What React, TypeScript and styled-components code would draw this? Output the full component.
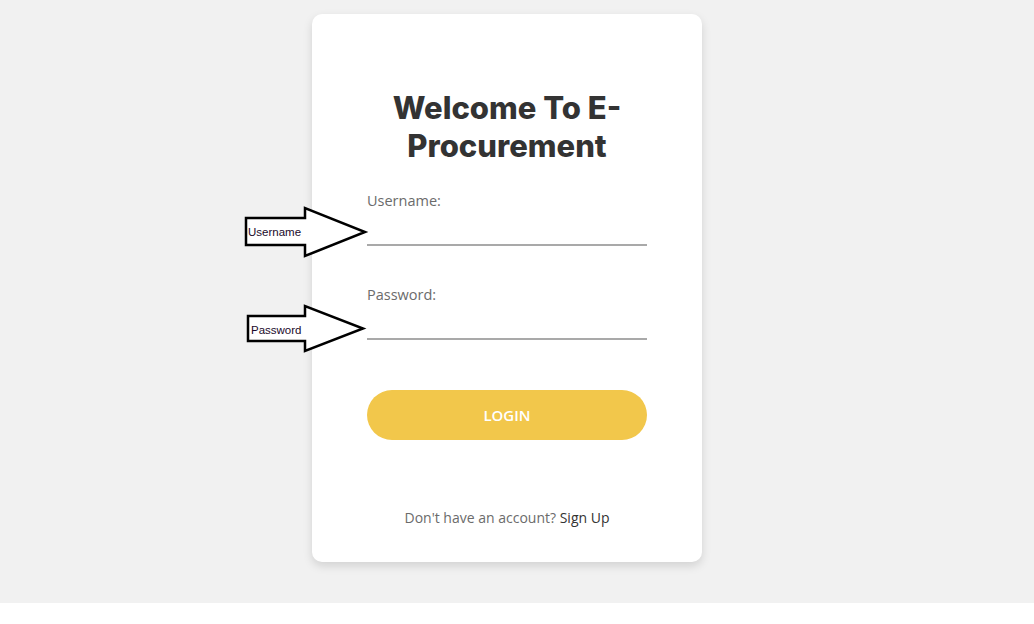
import React from "react";
import styled, { createGlobalStyle } from "styled-components";

const Global = createGlobalStyle`
  html, body { margin: 0; padding: 0; background: #ffffff; }
  body { font-family: "Open Sans", "Noto Sans", sans-serif; }
  * { box-sizing: border-box; }
`;

const Page = styled.main`
  position: relative;
  height: 603px;
  background: #f1f1f1;
  display: flex;
  justify-content: center;
  padding: 14px 20px 0 0;
`;

const Card = styled.section`
  width: 390px;
  height: 548px;
  background: #ffffff;
  border-radius: 10px;
  box-shadow: 0 4px 10px rgba(0, 0, 0, 0.13);
  padding: 75px 55px 0;
  display: flex;
  flex-direction: column;
`;

const Title = styled.h1`
  margin: 0;
  text-align: center;
  font-family: "Inter", "Open Sans", sans-serif;
  font-weight: 800;
  font-size: 31px;
  line-height: 37.5px;
  color: #333333;
  letter-spacing: 0;
`;

const Field = styled.div<{ $top: number }>`
  display: flex;
  flex-direction: column;
  margin-top: ${(p) => p.$top}px;
`;

const Label = styled.label`
  font-family: "Open Sans", sans-serif;
  font-size: 14.5px;
  line-height: 20px;
  color: #6b6b6b;
`;

const Input = styled.input`
  height: 35px;
  border: none;
  border-bottom: 2px solid #a9a9a9;
  background: transparent;
  outline: none;
  font-size: 14px;
  padding: 0;
`;

const LoginButton = styled.button`
  margin-top: 50px;
  height: 50px;
  border: none;
  border-radius: 25px;
  background: #f2c74b;
  color: #ffffff;
  font-family: "Open Sans", sans-serif;
  font-weight: 600;
  font-size: 15px;
  cursor: pointer;
`;

const Footer = styled.p`
  margin: 68px 0 0;
  text-align: center;
  font-family: "Open Sans", sans-serif;
  font-size: 14px;
  line-height: 20px;
  color: #6b6b6b;
`;

const SignUp = styled.a`
  color: #333333;
  text-decoration: none;
`;

const Callout = styled.div<{ $left: number; $top: number }>`
  position: absolute;
  left: ${(p) => p.$left}px;
  top: ${(p) => p.$top}px;
  width: 125px;
  height: 52px;
`;

const CalloutText = styled.span<{ $left: number }>`
  position: absolute;
  left: ${(p) => p.$left}px;
  top: 50%;
  transform: translateY(-50%);
  font-family: "Liberation Sans", "DejaVu Sans", sans-serif;
  font-size: 11.5px;
  color: #1a0a2a;
`;

function Arrow({ rectTop, rectBottom, headTop, headBottom, left, right, neck }: {
  rectTop: number; rectBottom: number; headTop: number; headBottom: number; left: number; right: number; neck: number;
}) {
  const mid = (headTop + headBottom) / 2;
  const pts = `${left},${rectTop} ${neck},${rectTop} ${neck},${headTop} ${right},${mid} ${neck},${headBottom} ${neck},${rectBottom} ${left},${rectBottom}`;
  return (
    <svg width="125" height="52" viewBox="0 0 125 52" style={{ position: "absolute", left: 0, top: 0 }}>
      <polygon points={pts} fill="#ffffff" stroke="#000000" strokeWidth="2.5" strokeLinejoin="miter" />
    </svg>
  );
}

export default function App() {
  return (
    <>
      <Global />
      <Page>
        <Card>
          <Title>
            Welcome To E-
            <br />
            Procurement
          </Title>
          <Field $top={27}>
            <Label>Username:</Label>
            <Input type="text" />
          </Field>
          <Field $top={39}>
            <Label>Password:</Label>
            <Input type="password" />
          </Field>
          <LoginButton>LOGIN</LoginButton>
          <Footer>
            Don't have an account? <SignUp href="#">Sign Up</SignUp>
          </Footer>
        </Card>
        <Callout $left={244} $top={206}>
          <Arrow left={2} right={121} neck={61} rectTop={12} rectBottom={39} headTop={2} headBottom={50} />
          <CalloutText $left={4}>Username</CalloutText>
        </Callout>
        <Callout $left={246} $top={304}>
          <Arrow left={2} right={117} neck={59} rectTop={12} rectBottom={37} headTop={2} headBottom={47} />
          <CalloutText $left={5}>Password</CalloutText>
        </Callout>
      </Page>
    </>
  );
}
